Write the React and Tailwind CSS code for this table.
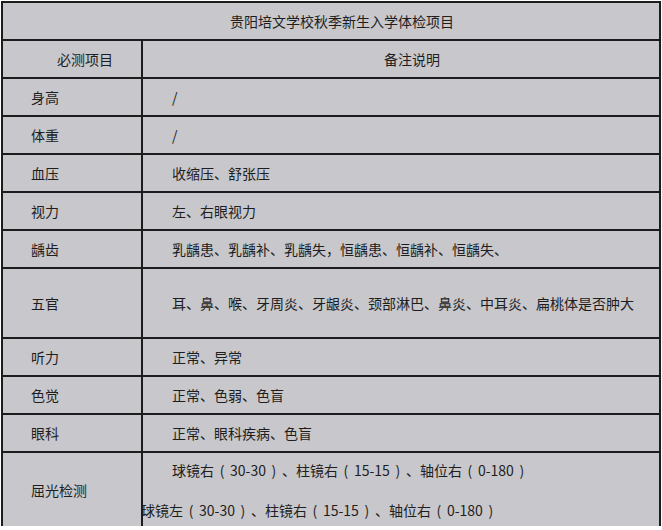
const rows = [
  { label: '身高', note: '/', h: 'h-[38px]' },
  { label: '体重', note: '/', h: 'h-[38px]' },
  { label: '血压', note: '收缩压、舒张压', h: 'h-[38px]' },
  { label: '视力', note: '左、右眼视力', h: 'h-[38px]' },
  { label: '龋齿', note: '乳龋患、乳龋补、乳龋失，恒龋患、恒龋补、恒龋失、', h: 'h-[38px]' },
  { label: '五官', note: '耳、鼻、喉、牙周炎、牙龈炎、颈部淋巴、鼻炎、中耳炎、扁桃体是否肿大', h: 'h-[70px]' },
  { label: '听力', note: '正常、异常', h: 'h-[38px]' },
  { label: '色觉', note: '正常、色弱、色盲', h: 'h-[38px]' },
  { label: '眼科', note: '正常、眼科疾病、色盲', h: 'h-[38px]' },
];

function Row({ label, note, h }) {
  return (
    <div className={`flex border-b-2 border-[#1c1c1c] ${h}`}>
      <div className="flex w-[140px] items-center border-r-2 border-[#1c1c1c] pl-[28px]">{label}</div>
      <div className="flex flex-1 items-center pl-[29px] whitespace-nowrap">{note}</div>
    </div>
  );
}

// full-width bracket with the glyph centred in its cell
function P({ c }) {
  return <span className="inline-block w-[16px] text-center">{c}</span>;
}

function Refraction({ side }) {
  return (
    <>
      球镜{side}<P c="(" />30-30<P c=")" />、柱镜右<P c="(" />15-15<P c=")" />、轴位右<P c="(" />0-180<P c=")" />
    </>
  );
}

export default function App() {
  return (
    <div
      className="h-[530px] w-[662px] bg-white pl-[1px] pt-[1px] text-[14px] leading-none text-[#1e1e1e]"
      style={{ fontFamily: '"Microsoft YaHei", "Noto Sans CJK SC", sans-serif' }}
    >
      <div className="w-[660px] border-x-2 border-t-2 border-[#1c1c1c] bg-[#c8c7cb]">
        {/* Title */}
        <div className="flex h-[38px] items-center border-b-2 border-[#1c1c1c] pl-[227px]">
          贵阳培文学校秋季新生入学体检项目
        </div>

        {/* Header */}
        <div className="flex h-[38px] border-b-2 border-[#1c1c1c]">
          <div className="flex w-[140px] items-center border-r-2 border-[#1c1c1c] pl-[54px]">必测项目</div>
          <div className="flex flex-1 items-center pl-[241px]">备注说明</div>
        </div>

        {rows.map((r) => (
          <Row key={r.label} {...r} />
        ))}

        {/* Refraction */}
        <div className="flex h-[73px]">
          <div className="flex w-[140px] items-center border-r-2 border-[#1c1c1c] pl-[28px]">屈光检测</div>
          <div className="flex flex-1 flex-col whitespace-nowrap pt-[10px]">
            <div className="pl-[29px]"><Refraction side="右" /></div>
            <div className="-ml-[2px] mt-[26px]"><Refraction side="左" /></div>
          </div>
        </div>
      </div>
    </div>
  );
}
